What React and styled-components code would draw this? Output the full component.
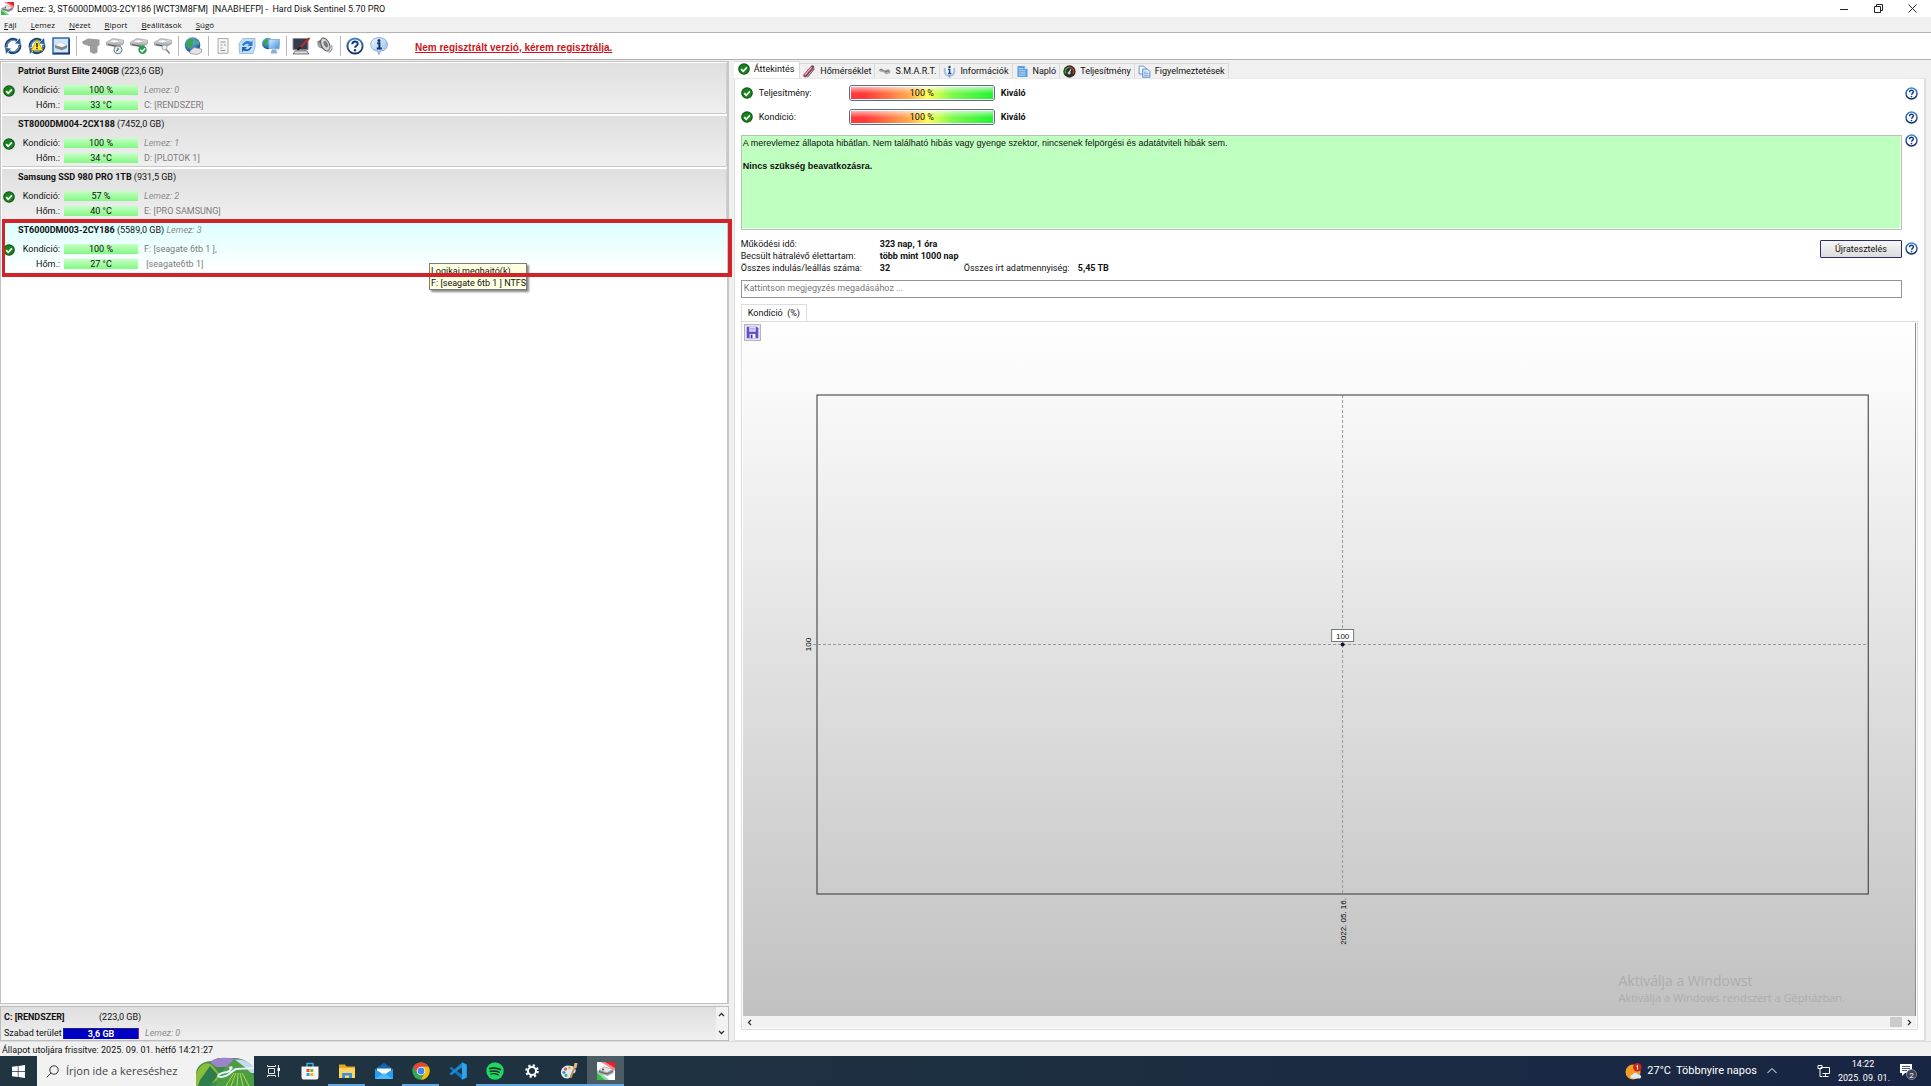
import React from "react";
import styled, { createGlobalStyle, css } from "styled-components";

const GlobalStyle = createGlobalStyle`
  * {
    box-sizing: border-box;
  }
  body {
    margin: 0;
    background: #f0f0f0;
    color: #111;
    font-family: Roboto, "Open Sans", sans-serif;
    font-size: 9px;
    line-height: 12px;
  }
  button,
  input {
    font: inherit;
    color: inherit;
    margin: 0;
    padding: 0;
  }
  svg {
    display: block;
    flex: none;
  }
`;

const Window = styled.div`
  display: flex;
  flex-direction: column;
  min-height: 100vh;
`;

const TitleBar = styled.header`
  display: flex;
  align-items: center;
  height: 17px;
  padding: 0 10px 0 1px;
  background: #fff;
  h1 {
    flex: 1;
    margin: 0 0 0 3px;
    font-size: 9px;
    font-weight: 400;
    white-space: pre;
  }
`;

const WindowButtons = styled.div`
  display: flex;
  button {
    display: flex;
    align-items: center;
    justify-content: center;
    width: 18px;
    height: 16px;
    margin-left: 16px;
    border: 0;
    background: none;
  }
`;

const MenuBar = styled.nav`
  display: flex;
  gap: 14px;
  height: 16px;
  padding: 2px 4px;
  border-bottom: 1px solid #b4b4b4;
  button {
    border: 0;
    background: none;
    font-family: "Open Sans", sans-serif;
    font-size: 8px;
    line-height: 12px;
  }
`;

const ToolBar = styled.div`
  display: flex;
  align-items: center;
  height: 27px;
  padding-left: 1px;
  background: #fff;
  border-bottom: 1px solid #b0b0b0;
  a {
    margin-left: 24px;
    padding-top: 3px;
    color: #cc1420;
    font-family: "Liberation Sans", sans-serif;
    font-size: 10px;
    font-weight: 700;
  }
`;

const ToolButton = styled.button`
  display: flex;
  align-items: center;
  justify-content: center;
  width: 24px;
  height: 22px;
  border: 0;
  background: none;
`;

const ToolSeparator = styled.i`
  width: 1px;
  height: 20px;
  margin: 0 2px 0 3px;
  background: #b8b8b8;
`;

const Workspace = styled.main`
  flex: 1;
  display: grid;
  grid-template-columns: 38fr 62fr;
  padding-top: 1px;
`;

const LeftColumn = styled.section`
  display: flex;
  flex-direction: column;
  gap: 2px;
  padding-right: 5px;
`;

const DiskList = styled.ul`
  flex: 1;
  margin: 0;
  padding: 1px 0 0 1px;
  list-style: none;
  background: #fff;
  border: 1px solid #c2c2c2;
  border-right: 2px solid #c8c8c8;
`;

const DiskItem = styled.li`
  position: relative;
  height: 51px;
  margin-bottom: 2px;
  padding-top: 2px;
  border-right: 1px solid #d0d0d0;
  border-bottom: 1px solid #c9c9c9;
  background: linear-gradient(#dfdfdf, #efefef);
  ${(props) =>
    props.$selected &&
    css`
      border-color: transparent;
      background: linear-gradient(#dcffff, #fff);
    `};
`;

const DiskName = styled.div`
  height: 17px;
  padding-left: 16px;
  line-height: 13px;
  em {
    color: #8c8c8c;
  }
`;

const DiskBody = styled.div`
  display: grid;
  grid-template-columns: 14px 47px 74px 1fr;
  grid-auto-rows: 15px;
  align-items: center;
  padding-left: 1px;
  > svg {
    grid-row: span 2;
    align-self: start;
    margin-top: 3px;
  }
`;

const Label = styled.span`
  padding-right: 4px;
  text-align: right;
`;

const Meter = styled.span`
  height: 10px;
  line-height: 11px;
  text-align: center;
  background: linear-gradient(#c6ffc6, #84f884);
`;

const Volume = styled.span`
  padding-left: 6px;
  color: #7c7c7c;
  white-space: pre;
  ${(props) =>
    props.$italic &&
    css`
      color: #8c8c8c;
      font-style: italic;
    `};
`;

const Highlight = styled.div`
  position: absolute;
  inset: -3px -6px -5px 0;
  z-index: 3;
  border: 4px solid #d2232a;
  border-left-width: 3px;
`;

const Tooltip = styled.div`
  position: absolute;
  top: 41px;
  left: 59%;
  z-index: 2;
  padding: 1px 0 0 1px;
  line-height: 12px;
  background: #ffffe1;
  border: 1px solid #7c7c7c;
  box-shadow: 2px 2px 2px #0007;
`;

const VolumePanel = styled.div`
  display: flex;
  height: 35px;
  border: 1px solid #bdbdbd;
  background: linear-gradient(#dfdfdf, #efefef);
`;

const VolumeGrid = styled.div`
  flex: 1;
  display: grid;
  grid-template-columns: 59px 76px 1fr;
  grid-template-rows: 19px 14px;
  align-items: center;
  padding-left: 3px;
  white-space: nowrap;
  .name {
    font-weight: 700;
  }
  .size {
    grid-column: span 2;
    padding-left: 36px;
  }
  .free {
    height: 11px;
    line-height: 11px;
    color: #fff;
    font-weight: 700;
    text-align: center;
    background: #0000c4;
    border: 1px solid #22227c;
    border-right-color: #8c2a6c;
    border-bottom: 0;
  }
`;

const ScrollArrows = styled.div`
  display: flex;
  flex-direction: column;
  justify-content: space-between;
  align-items: center;
  width: 12px;
  padding: 4px 0;
  background: #f2f2f2;
`;

const RightColumn = styled.section`
  display: flex;
  flex-direction: column;
  min-width: 0;
  padding-right: 5px;
`;

const TabList = styled.div`
  display: flex;
  align-items: flex-end;
  height: 17px;
`;

const Tab = styled.button`
  display: flex;
  align-items: center;
  gap: 4px;
  height: 15px;
  padding: 0 3px;
  border: 1px solid #dadada;
  border-left: 0;
  border-bottom: 0;
  background: #f0f0f0;
  white-space: nowrap;
  ${(props) =>
    props.$active &&
    css`
      height: 17px;
      padding: 0 5px 2px 4px;
      background: #fff;
    `};
`;

const TabPage = styled.div`
  flex: 1;
  display: flex;
  flex-direction: column;
  padding: 2px 6px 10px 6px;
  background: #fff;
  border: 1px solid #dedede;
  border-top-color: #e8e8e8;
  border-right-width: 2px;
`;

const GaugeRow = styled.div`
  display: grid;
  grid-template-columns: 18px 90px 146px 1fr 14px;
  align-items: center;
  height: 24px;
  strong {
    padding-left: 6px;
  }
  > svg:last-child {
    justify-self: end;
  }
`;

const Gauge = styled.div`
  height: 16px;
  padding: 1px;
  border: 1px solid #5a6c84;
  border-radius: 3px;
  text-align: center;
  line-height: 12px;
  span {
    display: block;
    background: linear-gradient(#fff9, #fff0 55%),
      linear-gradient(90deg, #ff3a3a 10%, #ffb050 42%, #fcff50 54%, #7cf850 72%, #22f432);
  }
`;

const WithHelp = styled.div`
  display: grid;
  grid-template-columns: 1fr 14px;
  column-gap: 2px;
`;

const StatusText = styled.div`
  min-height: 95px;
  margin-top: 6px;
  padding: 1px;
  background: #bfffbf;
  border: 1px solid #b4c4b4;
  box-shadow: inset -1px -1px #f4fff4;
  font-family: "Liberation Sans", sans-serif;
  font-size: 9px;
  p {
    margin: 0 0 11px;
    line-height: 12px;
  }
`;

const HelpTop = styled.div`
  display: flex;
  justify-content: flex-end;
  align-items: flex-start;
  padding-top: ${(props) => props.$top || 5}px;
`;

const Facts = styled.div`
  display: grid;
  grid-template-columns: 139px 84px 114px 1fr 82px;
  grid-auto-rows: 12px;
  margin-top: 8px;
  white-space: nowrap;
  button {
    grid-area: 1 / 5 / span 2;
    height: 18px;
    margin-top: 2px;
    border: 1px solid #2c2c6c;
    border-radius: 1px;
    background: linear-gradient(#f6f6f6, #dcdcdc);
  }
`;

const NoteInput = styled.input`
  width: calc(100% - 16px);
  height: 18px;
  margin: 6px 0;
  padding: 0 2px 2px;
  border: 1px solid #949494;
  background: #fff;
  &::placeholder {
    color: #787878;
    opacity: 1;
  }
`;

const ChartTab = styled.button`
  align-self: flex-start;
  height: 17px;
  padding: 0 6px;
  border: 1px solid #dcdcdc;
  border-bottom: 0;
  background: #fff;
  white-space: pre;
`;

const ChartFrame = styled.div`
  flex: 1;
  display: flex;
  flex-direction: column;
  padding: 1px;
  border: 1px solid #dcdcdc;
`;

const ChartPanel = styled.div`
  position: relative;
  flex: 1;
  display: flex;
  padding: 72px 47px 122px 74px;
  background: linear-gradient(#fff, #c1c1c1);
  border-right: 1px solid #8c8c8c;
`;

const SaveButton = styled.button`
  position: absolute;
  top: 1px;
  left: 1px;
  display: flex;
  padding: 1px;
  border: 1px solid #b4b4c4;
  background: #e6e4f2;
`;

const Plot = styled.svg`
  flex: 1;
  min-width: 0;
  overflow: visible;
  font-family: "Liberation Sans", sans-serif;
  font-size: 8px;
`;

const Watermark = styled.div`
  position: absolute;
  right: 70px;
  bottom: 10px;
  color: #adadad;
  font-family: "Open Sans", sans-serif;
  font-size: 11px;
  line-height: 17px;
  strong {
    display: block;
    font-size: 14px;
    font-weight: 400;
  }
`;

const ScrollBar = styled.div`
  display: flex;
  align-items: center;
  height: 12px;
  padding: 0 3px;
  background: #f2f2f2;
  i {
    width: 12px;
    height: 10px;
    margin: 0 4px 0 auto;
    background: #cbcbcb;
  }
`;

const StatusBar = styled.footer`
  height: 15px;
  padding: 2px;
  border-top: 1px solid #dcdcdc;
`;

const TaskBar = styled.div`
  display: flex;
  height: 30px;
  color: #fff;
  background: linear-gradient(90deg, #20353f, #1d2f42 50%, #182543);
`;

const TaskButton = styled.button`
  display: flex;
  align-items: center;
  justify-content: center;
  width: 37px;
  padding: 0 1px;
  border: 0;
  background: ${(props) => (props.$active ? "#4b5c65" : "none")};
  box-shadow: ${(props) => (props.$open ? "inset 0 -2px #62a8e0" : "none")};
`;

const SearchBox = styled.label`
  display: flex;
  align-items: center;
  width: 217px;
  padding-left: 9px;
  background: #f2f2f2;
  color: #444;
  input {
    flex: 1;
    width: 0;
    margin-left: 7px;
    border: 0;
    background: none;
    font-family: "Open Sans", sans-serif;
    font-size: 11px;
    &::placeholder {
      color: #444;
      opacity: 1;
    }
  }
`;

const Tray = styled.div`
  display: flex;
  align-items: center;
  margin-left: auto;
  padding-right: 14px;
  font-size: 11px;
  white-space: nowrap;
`;

const Weather = styled.span`
  display: flex;
  align-items: center;
  gap: 5px;
  margin-right: 10px;
`;

const Clock = styled.time`
  width: 50px;
  margin: 0 11px 0 5px;
  font-size: 9px;
  line-height: 14px;
  text-align: center;
`;

const Icon = ({ size = 18, w, h, box = 18, children }) => (
  <svg
    width={w || size}
    height={h || size}
    viewBox={`0 0 ${box} ${h ? Math.round((box * h) / (w || size)) : box}`}
    fill="none"
    aria-hidden="true"
  >
    {children}
  </svg>
);

const Gradients = () => (
  <svg width="0" height="0" style={{ position: "absolute" }} aria-hidden="true">
    <defs>
      <linearGradient id="metal" x1="0" y1="0" x2="0" y2="1">
        <stop offset="0" stopColor="#f4f4f4" />
        <stop offset="1" stopColor="#8a8f94" />
      </linearGradient>
      <linearGradient id="sky" x1="0" y1="0" x2="1" y2="1">
        <stop offset="0" stopColor="#eef8ff" />
        <stop offset="1" stopColor="#8cbce8" />
      </linearGradient>
      <linearGradient id="screen" x1="0" y1="0" x2="1" y2="1">
        <stop offset="0" stopColor="#d4efff" />
        <stop offset="1" stopColor="#3c8cdc" />
      </linearGradient>
      <radialGradient id="globe" cx="0.4" cy="0.3" r="0.7">
        <stop offset="0" stopColor="#7cc4f4" />
        <stop offset="1" stopColor="#124c9c" />
      </radialGradient>
      <linearGradient id="ring" x1="0" y1="0" x2="0" y2="1">
        <stop offset="0" stopColor="#3f86cc" />
        <stop offset="1" stopColor="#12305e" />
      </linearGradient>
    </defs>
  </svg>
);

const CheckIcon = ({ size = 12 }) => (
  <Icon size={size} box={12}>
    <circle cx="6" cy="6" r="5.8" fill="#0c4d12" />
    <circle cx="6" cy="6" r="4.8" fill="#16841c" />
    <path d="M3.2 6.1l2 2.2 3.7-4" stroke="#fff" strokeWidth="1.7" />
  </Icon>
);

const HelpIcon = ({ size = 13 }) => (
  <Icon size={size}>
    <circle cx="9" cy="9" r="7.6" fill="#fff" stroke="url(#ring)" strokeWidth="2" />
    <path
      d="M6.3 7.2c0-3.6 5.6-3.5 5.4-.2-.1 1.8-2.6 1.9-2.6 3.8"
      stroke="#173a86"
      strokeWidth="2"
    />
    <circle cx="9" cy="13.2" r="1.2" fill="#173a86" />
  </Icon>
);

const Refresh = () => (
  <>
    <path d="M2.3 10.5A6.9 6.9 0 0 1 13 3.6" stroke="#1d4578" strokeWidth="3" />
    <path d="M15.7 7.5A6.9 6.9 0 0 1 5 14.4" stroke="#1d4578" strokeWidth="3" />
    <path d="M2.6 9.5A6.4 6.4 0 0 1 12 4" stroke="#7cacdc" />
    <path d="M15.4 8.5A6.4 6.4 0 0 1 6 14" stroke="#7cacdc" />
    <path d="M11 6.6l5.8.4L16 1z" fill="#2c5c94" />
    <path d="M7 11.4L1.2 11 2 17z" fill="#2c5c94" />
  </>
);

const Drive = () => (
  <>
    <path d="M.5 5L7 1.5l10.5 1.7v3.5L11.5 10 .5 8z" fill="url(#metal)" stroke="#999" strokeWidth=".7" />
    <ellipse cx="8.5" cy="4.3" rx="4.5" ry="1.6" fill="#fafafa" stroke="#999" strokeWidth=".6" />
    <path d="M2 7.7l9 1.6" stroke="#555" />
  </>
);

const Magnet = () => (
  <>
    <path d="M2.5 4C1 13 5 15 9 15s8-2 6.5-11" stroke="#9cc0e4" strokeWidth="2.5" />
    <path d="M9 14v3.5" stroke="#7ca4cc" strokeWidth="2" />
    <path d="M7 6.3h2.2v5.5M7 11.8h4.6" stroke="#174c9c" strokeWidth="2" />
    <circle cx="9" cy="2.8" r="1.7" fill="#174c9c" />
  </>
);

const Bubble = () => (
  <>
    <path
      d="M9 .6c11 0 11 13.2 1.5 13.4L8.8 17.5 7.5 14C-2 13.5-1.5.6 9 .6z"
      fill="url(#sky)"
      stroke="#7c9cbc"
      strokeWidth=".8"
    />
    <path d="M7.2 6.3h2.2v5M6.8 11.4h5" stroke="#14307c" strokeWidth="2" />
    <circle cx="9" cy="3.4" r="1.5" fill="#14307c" />
  </>
);

const DiskLogo = () => (
  <>
    <path d="M0 0h18v18H0z" fill="#fff" />
    <path d="M4 0h14v9z" fill="#f4868c" />
    <path d="M8 0h10v6z" fill="#e8202c" />
    <path d="M0 8l12 10H0z" fill="#8cd89c" />
    <path d="M0 11l8 7H0z" fill="#38b84c" />
    <path d="M1.5 8l6-3.5 9 2.5v4l-6 3-9-3z" fill="#a4a4a4" />
    <path d="M2.5 7.8l5-2.5 7.5 2-5 3z" fill="#e6e6e6" />
    <path d="M2 9.5l8 2.5 6-3" stroke="#555" strokeWidth=".9" />
    <circle cx="6" cy="7.5" r="1" fill="#444" />
  </>
);

const toolIcons = [
  ["Frissítés", <Refresh />],
  [
    "Figyelmeztetés",
    <>
      <Refresh />
      <path d="M9 2.5l6 11H3z" fill="#ffe62c" stroke="#a48a00" strokeWidth=".7" />
      <path d="M9 6v4M9 10.8v1.5" stroke="#222" strokeWidth="1.5" />
    </>,
  ],
  [
    "Áttekintés",
    <>
      <path d="M1 1h16v16H1z" fill="#cfe6fa" stroke="#2c68ac" strokeWidth="1.5" />
      <path d="M1.5 16.3h15.8V2" stroke="#1c3c6c" strokeWidth="1.5" />
      <path d="M3 8l5-2.5L15 8v3l-5 2.2L3 11z" fill="#84888c" />
      <path d="M3 8l5-2.5L15 8l-5 2.3z" fill="#f6f6f6" />
    </>,
  ],
  null,
  [
    "Lemez",
    <path d="M0 4.5L6 1.5l11.5 1V8l-2 1.5v6L12 17l-4-2V9.5L1 7z" fill="#9c9c9c" />,
  ],
  [
    "Ütemezés",
    <>
      <Drive />
      <circle cx="12" cy="12.8" r="4" fill="#e4edf2" stroke="#6c7c88" />
      <path d="M12 10.8V13l-1.8 1" stroke="#345" />
    </>,
  ],
  [
    "Teszt",
    <>
      <Drive />
      <circle cx="12.5" cy="12.7" r="4.2" fill="#289c48" />
      <path d="M10.3 12.6l1.8 2 3-3.4" stroke="#fff" strokeWidth="1.4" />
    </>,
  ],
  [
    "Keresés",
    <>
      <Drive />
      <circle cx="10.5" cy="10.5" r="2.5" fill="#e4f2fa" stroke="#9caab4" />
      <path d="M12.2 12.5l3.5 4" stroke="#8c7c6c" strokeWidth="1.5" />
    </>,
  ],
  null,
  [
    "Hálózat",
    <>
      <circle cx="8.5" cy="8" r="7.8" fill="url(#globe)" />
      <path d="M3 4c2-3 5-3 6-2 2 2-1 3 0 5s-3 3-2 5c-4-1-5-4-4-8z" fill="#3ca44c" />
      <path d="M11 3l4 2v3l-3-1z" fill="#4cb45c" />
      <path d="M6 14l4-3.5 7.5 1.5v3L13 17.5l-7-1z" fill="#e4e4e4" stroke="#8c8c8c" strokeWidth=".7" />
    </>,
  ],
  null,
  [
    "Jelentés",
    <>
      <path d="M4 1.5h10v14.8H4z" fill="#f4f4f2" stroke="#acaca4" />
      <path d="M6.5 5h5M6.5 8h2M10 8h2M6.5 11h2M6.5 13.5h5" stroke="#8c9c9c" />
    </>,
  ],
  [
    "Küldés",
    <>
      <path d="M1 6.5l4-5h12V10l-2 6.5H1.5z" fill="#c4e0f8" stroke="#8cb0d4" strokeWidth=".8" />
      <path d="M4 8c2-4 6-5 9-3l1.5-1.8V9H9.2l2-1.8C9 6 7 6.8 6 9z" fill="#2c7cdc" />
      <path d="M14 10c-2 4.5-6 5-8.5 3.5L4 15.5V10h5l-1.7 1.8C9 13 11 12 12 10z" fill="#1c64bc" />
    </>,
  ],
  [
    "Távoli elérés",
    <>
      <circle cx="5.8" cy="6.5" r="5.7" fill="url(#globe)" />
      <path d="M2 4c2-3 4-2 4 0s-2 3-1 5c-3 0-4-3-3-5z" fill="#3ca44c" />
      <path d="M7 2.5h10.8L17 12l-10-.5z" fill="url(#screen)" stroke="#8cb4dc" />
      <path d="M10 12.5h4l1.5 4h-7z" fill="#8cb0d4" />
    </>,
  ],
  null,
  [
    "Képernyő",
    <>
      <path d="M1 1.5h15v11.3H1z" fill="#343c50" stroke="#8c8c9c" />
      <path d="M1 17l2.5-3.2h11L17 17z" fill="#d8d8d8" stroke="#444" strokeWidth=".7" />
      <path d="M17.5 1L8 10.5" stroke="#b8301c" strokeWidth="2" />
      <path d="M8.5 10l-3 3" stroke="#111" strokeWidth="1.5" />
    </>,
  ],
  [
    "Hangok",
    <>
      <path d="M1.5 4.5L8 1l5 12.5L4.5 11z" fill="#6c6c6c" />
      <path d="M1.5 4.5C.5 7 2 10.5 4.5 11L6 7z" fill="#9c9c9c" />
      <ellipse cx="9.3" cy="7.5" rx="4" ry="7" fill="#d4d4d4" stroke="#5c5c5c" transform="rotate(-25 9.3 7.5)" />
      <ellipse cx="9.8" cy="7.2" rx="1.8" ry="3.4" fill="#777" transform="rotate(-25 9.8 7.2)" />
      <path d="M15.5 8c1.5 3 .5 6-3 7.5M13.5 9.5c.5 2 0 3-1.5 4" stroke="#9494b4" strokeWidth="1.2" />
    </>,
  ],
  null,
  ["Súgó", <HelpIcon size={18} />],
  ["Névjegy", <Bubble />],
];

const tabs = [
  ["Áttekintés", <CheckIcon />],
  [
    "Hőmérséklet",
    <Icon size={13}>
      <path d="M3 14.5L13 3" stroke="#8c3c54" strokeWidth="5" strokeLinecap="round" />
      <path d="M2.5 14L12 3" stroke="#ecc4cc" strokeWidth="1.5" />
      <path d="M6 17l10-12" stroke="#646464" strokeWidth="1.5" />
    </Icon>,
  ],
  [
    "S.M.A.R.T.",
    <Icon size={13}>
      <path d="M1 7l4-2 3 2 7-1 2 2v3l-6 2-3-3-5-1z" fill="#aaa" />
      <path d="M2 7l3-1 2 2M9 9.5L14 8l2 1.5" stroke="#555" />
    </Icon>,
  ],
  [
    "Információk",
    <Icon size={13}>
      <Magnet />
    </Icon>,
  ],
  [
    "Napló",
    <Icon size={13}>
      <path d="M2 1.5h10l4 4v11H2z" fill="#5ca0e0" />
      <path d="M4 5h6M4 8h9M4 11h9M4 14h9" stroke="#e4f2fc" />
      <path d="M12 1.5l4 4h-4z" fill="#d4e8f8" />
    </Icon>,
  ],
  [
    "Teljesítmény",
    <Icon size={13}>
      <circle cx="9" cy="9" r="8.5" fill="#2a2f2a" />
      <path d="M4 12a6 6 0 0 1 5-9" stroke="#3ca43c" strokeWidth="2" />
      <path d="M9 3a6 6 0 0 1 5 9" stroke="#bc3c2c" strokeWidth="2" />
      <path d="M8 11l3-5" stroke="#ececec" strokeWidth="1.5" />
      <circle cx="8.5" cy="11" r="2" fill="#ccc" />
    </Icon>,
  ],
  [
    "Figyelmeztetések",
    <Icon size={13}>
      <path d="M1.5 1.5H8l3 3v8H1.5z" fill="#f4faff" stroke="#3c6cbc" />
      <path d="M6.5 5.5H13L16.5 9v8h-10z" fill="#d4e6fa" stroke="#3c6cbc" />
      <path d="M8.5 10h3M8.5 12h6M8.5 14.5h6" stroke="#6c94cc" />
    </Icon>,
  ],
];

const disks = [
  { name: "Patriot Burst Elite 240GB", size: "223,6 GB", health: "100 %", temp: "33 °C", no: 0, letter: "C:", volume: "[RENDSZER]" },
  { name: "ST8000DM004-2CX188", size: "7452,0 GB", health: "100 %", temp: "34 °C", no: 1, letter: "D:", volume: "[PLOTOK 1]" },
  { name: "Samsung SSD 980 PRO 1TB", size: "931,5 GB", health: "57 %", temp: "40 °C", no: 2, letter: "E:", volume: "[PRO SAMSUNG]" },
  { name: "ST6000DM003-2CY186", size: "5589,0 GB", health: "100 %", temp: "27 °C", no: 3, selected: true },
];

const Disk = ({ disk }) => (
  <DiskItem $selected={disk.selected}>
    <DiskName>
      <strong>{disk.name}</strong> ({disk.size}) {disk.selected && <em>Lemez: {disk.no}</em>}
    </DiskName>
    <DiskBody>
      <CheckIcon />
      <Label>Kondíció:</Label>
      <Meter>{disk.health}</Meter>
      {disk.selected ? (
        <Volume>F: [seagate 6tb 1 ],</Volume>
      ) : (
        <Volume $italic>Lemez: {disk.no}</Volume>
      )}
      <Label>Hőm.:</Label>
      <Meter>{disk.temp}</Meter>
      <Volume>{disk.selected ? " [seagate6tb 1]" : `${disk.letter} ${disk.volume}`}</Volume>
    </DiskBody>
    {disk.selected && (
      <>
        <Tooltip role="tooltip">
          Logikai meghajtó(k)
          <br />
          F: [seagate 6tb 1 ] NTFS
        </Tooltip>
        <Highlight />
      </>
    )}
  </DiskItem>
);

const Chart = () => (
  <Plot role="img" aria-label="Kondíció (%)">
    <line x1="-4" x2="100%" y1="50%" y2="50%" stroke="#999" strokeDasharray="3 2" />
    <line x1="50%" x2="50%" y1="0" y2="100%" stroke="#999" strokeDasharray="3 2" />
    <rect width="100%" height="100%" fill="none" stroke="#333" />
    <svg x="50%" y="50%" overflow="visible">
      <rect x="-11" y="-15" width="22" height="12" fill="#fff" stroke="#777" />
      <text y="-6" textAnchor="middle" fill="#111">
        100
      </text>
      <circle r="2" fill="#14143c" />
    </svg>
    <svg x="0" y="50%" overflow="visible">
      <text transform="translate(-6 0) rotate(-90)" textAnchor="middle">
        100
      </text>
    </svg>
    <svg x="50%" y="100%" overflow="visible">
      <text transform="translate(3 4) rotate(-90)" textAnchor="end">
        2022. 05. 16.
      </text>
    </svg>
  </Plot>
);

const Chevron = ({ d }) => (
  <Icon size={7} box={7}>
    <path d={d} stroke="#333" strokeWidth="1.3" />
  </Icon>
);

const taskIcons = [
  {
    label: "Feladatnézet",
    icon: (
      <>
        <path d="M4.5 6.5h6v5h-6zM3.5 3v1.5h8V3M3.5 15v-1.5h8V15M14.5 3v12" stroke="#e4e4e4" />
        <path d="M13.5 6H16v3h-2.5z" fill="#fff" />
      </>
    ),
  },
  {
    label: "Microsoft Store",
    icon: (
      <>
        <path d="M6 5V1.5h6V5" stroke="#38b0e4" strokeWidth="1.5" />
        <path d="M.5 4.5h17V15q0 2.5-2 2.5h-13q-2 0-2-2.5z" fill="#f6f6f6" />
        <path d="M5.5 7h3v3h-3z" fill="#e4502c" />
        <path d="M9.3 7h3v3h-3z" fill="#7cb42c" />
        <path d="M5.5 11h3v3h-3z" fill="#2c9ce4" />
        <path d="M9.3 11h3v3h-3z" fill="#f4b41c" />
      </>
    ),
  },
  {
    label: "Fájlkezelő",
    open: true,
    icon: (
      <>
        <path d="M1 2.5h6l1.5 2H17V15H1z" fill="#e8a820" />
        <path d="M1 6h16v10H1z" fill="#fcd462" />
        <path d="M4 16v-5h10v5h-3v-2.5H7V16z" fill="#3c94dc" />
      </>
    ),
  },
  {
    label: "Posta",
    icon: (
      <>
        <path d="M0 7l9-6 9 6v10H0z" fill="#1464b4" />
        <path d="M2 6.5h14V12H2z" fill="#f4faff" />
        <path d="M0 7l9 6 9-6v10H0z" fill="#2c9cec" />
        <path d="M0 17l9-6 9 6z" fill="#4cbcfc" />
      </>
    ),
  },
  {
    label: "Chrome",
    open: true,
    icon: (
      <>
        <circle cx="9" cy="9" r="8.7" fill="#34a853" />
        <path d="M1.5 4.7A8.7 8.7 0 0 1 16.5 4.7H9L5.3 11.2z" fill="#ea4335" />
        <path d="M16.5 4.7A8.7 8.7 0 0 1 9 17.7L12.8 11 9 4.7z" fill="#fbbc05" />
        <circle cx="9" cy="9" r="4.3" fill="#fff" />
        <circle cx="9" cy="9" r="3.4" fill="#4285f4" />
      </>
    ),
  },
  {
    label: "Visual Studio Code",
    icon: (
      <>
        <path d="M.5 6.2l1.8-1.4L13.5 13v4.7z" fill="#1474bc" />
        <path d="M.5 11.8l1.8 1.4L13.5 5V.3z" fill="#1c88d4" />
        <path d="M13 .3l4.8 2.2v13L13 17.7z" fill="#2ca4f4" />
      </>
    ),
  },
  {
    label: "Spotify",
    open: true,
    icon: (
      <>
        <circle cx="9" cy="9" r="8.7" fill="#1ed760" />
        <path d="M3.8 6.6c3.6-1 7.4-.7 10.5 1" stroke="#14242c" strokeWidth="1.7" strokeLinecap="round" />
        <path d="M4.3 9.4c3-.8 6.3-.5 9 .9" stroke="#14242c" strokeWidth="1.5" strokeLinecap="round" />
        <path d="M4.8 12c2.6-.6 5.2-.3 7.4.9" stroke="#14242c" strokeWidth="1.2" strokeLinecap="round" />
      </>
    ),
  },
  {
    label: "Gépház",
    open: true,
    icon: (
      <>
        <circle cx="9" cy="9" r="4" stroke="#fff" strokeWidth="2" />
        <circle cx="9" cy="9" r="5.7" stroke="#fff" strokeWidth="2.2" strokeDasharray="2.238 2.238" />
      </>
    ),
  },
  {
    label: "Paint",
    open: true,
    icon: (
      <>
        <path d="M8 3.5c6 0 8.5 3 7.5 6s-4 1.5-4.5 3-.5 4-4 4C3 16.5.5 13 1 9.5s3.5-6 7-6z" fill="#dce8f0" />
        <circle cx="4" cy="10.5" r="1.5" fill="#3c84dc" />
        <circle cx="5.5" cy="7" r="1.5" fill="#dc4c3c" />
        <circle cx="9.5" cy="6" r="1.4" fill="#f4b42c" />
        <circle cx="6" cy="13.5" r="1.4" fill="#3cac54" />
        <path d="M16 1.5L10.5 16" stroke="#c48c4c" strokeWidth="2" />
        <path d="M14.5 1h3l-1 5h-3z" fill="#e4b47c" />
      </>
    ),
  },
  { label: "Hard Disk Sentinel", open: true, active: true, icon: <DiskLogo /> },
];

const menu = ["Fájl", "Lemez", "Nézet", "Riport", "Beállítások", "Súgó"];

const App = () => {
  return (
    <Window>
      <GlobalStyle />
      <Gradients />
      <TitleBar>
        <Icon size={13}>
          <DiskLogo />
        </Icon>
        <h1>{"Lemez: 3, ST6000DM003-2CY186 [WCT3M8FM]  [NAABHEFP] -  Hard Disk Sentinel 5.70 PRO"}</h1>
        <WindowButtons>
          <button aria-label="Kis méret">
            <Icon size={8} box={8}>
              <path d="M0 4.5h8" stroke="#222" />
            </Icon>
          </button>
          <button aria-label="Előző méret">
            <Icon size={9} box={9}>
              <path d="M.5 2.5h6v6h-6zM2.5 2.5v-2h6v6h-2" stroke="#222" />
            </Icon>
          </button>
          <button aria-label="Bezárás">
            <Icon size={9} box={9}>
              <path d="M.5.5l8 8M8.5.5l-8 8" stroke="#222" />
            </Icon>
          </button>
        </WindowButtons>
      </TitleBar>
      <MenuBar>
        {menu.map((item) => (
          <button key={item}>
            <u>{item[0]}</u>
            {item.slice(1)}
          </button>
        ))}
      </MenuBar>
      <ToolBar>
        {toolIcons.map((tool, i) =>
          tool ? (
            <ToolButton key={i} aria-label={tool[0]}>
              <Icon>{tool[1]}</Icon>
            </ToolButton>
          ) : (
            <ToolSeparator key={i} />
          )
        )}
        <a href="#register">Nem regisztrált verzió, kérem regisztrálja.</a>
      </ToolBar>
      <Workspace>
        <LeftColumn>
          <DiskList>
            {disks.map((disk) => (
              <Disk key={disk.no} disk={disk} />
            ))}
          </DiskList>
          <VolumePanel>
            <VolumeGrid>
              <span className="name">C: [RENDSZER]</span>
              <span className="size">(223,0 GB)</span>
              <span>Szabad terület</span>
              <span className="free">3,6 GB</span>
              <Volume $italic>Lemez: 0</Volume>
            </VolumeGrid>
            <ScrollArrows>
              <Chevron d="M1 5l2.5-2.5L6 5" />
              <Chevron d="M1 2l2.5 2.5L6 2" />
            </ScrollArrows>
          </VolumePanel>
        </LeftColumn>
        <RightColumn>
          <TabList role="tablist">
            {tabs.map(([label, icon], i) => (
              <Tab key={label} role="tab" aria-selected={i === 0} $active={i === 0}>
                {icon}
                {label}
              </Tab>
            ))}
          </TabList>
          <TabPage>
            {["Teljesítmény:", "Kondíció:"].map((label) => (
              <GaugeRow key={label}>
                <CheckIcon />
                <span>{label}</span>
                <Gauge>
                  <span>100 %</span>
                </Gauge>
                <strong>Kiváló</strong>
                <HelpIcon />
              </GaugeRow>
            ))}
            <WithHelp>
              <StatusText>
                <p>
                  A merevlemez állapota hibátlan. Nem található hibás vagy gyenge szektor, nincsenek
                  felpörgési és adatátviteli hibák sem.
                </p>
                <p>
                  <strong>Nincs szükség beavatkozásra.</strong>
                </p>
              </StatusText>
              <HelpTop>
                <HelpIcon />
              </HelpTop>
            </WithHelp>
            <WithHelp>
              <Facts>
                <span>Működési idő:</span>
                <strong>323 nap, 1 óra</strong>
                <span />
                <span />
                <button>Újratesztelés</button>
                <span>Becsült hátralévő élettartam:</span>
                <strong>több mint 1000 nap</strong>
                <span />
                <span />
                <span>Összes indulás/leállás száma:</span>
                <strong>32</strong>
                <span>Összes írt adatmennyiség:</span>
                <strong>5,45 TB</strong>
              </Facts>
              <HelpTop $top={12}>
                <HelpIcon />
              </HelpTop>
            </WithHelp>
            <NoteInput aria-label="Megjegyzés" placeholder="Kattintson megjegyzés megadásához ..." />
            <ChartTab>{"Kondíció  (%)"}</ChartTab>
            <ChartFrame>
              <ChartPanel>
                <SaveButton aria-label="Mentés">
                  <Icon size={13}>
                    <path d="M1 1h14l2 2v14H1z" fill="#6450c4" />
                    <path d="M4.5 1h9v7h-9z" fill="#dcdcf4" />
                    <path d="M5 11h8v6H5z" fill="#f4f4fc" />
                    <path d="M6.5 12H9v5H6.5z" fill="#4434a4" />
                    <path d="M6 3.5h6M6 5.5h6" stroke="#a49cd4" />
                  </Icon>
                </SaveButton>
                <Chart />
                <Watermark>
                  <strong>Aktiválja a Windowst</strong>
                  Aktiválja a Windows rendszert a Gépházban.
                </Watermark>
              </ChartPanel>
              <ScrollBar>
                <Chevron d="M5 1L2.5 3.5 5 6" />
                <i />
                <Chevron d="M2 1l2.5 2.5L2 6" />
              </ScrollBar>
            </ChartFrame>
          </TabPage>
        </RightColumn>
      </Workspace>
      <StatusBar>Állapot utoljára frissítve: 2025. 09. 01. hétfő 14:21:27</StatusBar>
      <TaskBar>
        <TaskButton aria-label="Start">
          <Icon size={13} box={13}>
            <path d="M0 1.8L5.8 1v5.2H0zM6.5.9L13 0v6.2H6.5zM0 6.9h5.8V12L0 11.2zM6.5 6.9H13V13l-6.5-.9z" fill="#fff" />
          </Icon>
        </TaskButton>
        <SearchBox>
          <Icon size={13} box={13}>
            <circle cx="8" cy="5" r="4.2" stroke="#333" />
            <path d="M5 8L.7 12.3" stroke="#333" />
          </Icon>
          <input type="search" aria-label="Keresés" placeholder="Írjon ide a kereséshez" />
          <svg width="58" height="30" viewBox="0 0 58 30" aria-hidden="true">
            <path d="M0 30V17C1 9 8 5 16 5l6-3h18c8 1 14 5 18 10v18z" fill="#3c8c4c" />
            <path d="M14 6c6-6 24-5 36-1l4 6H20z" fill="#9c84cc" />
            <path d="M38 5c6-3 12-1 20 6v6H40z" fill="#c4dce8" />
            <path d="M0 18C4 8 10 5 16 9l10 12L12 30H0z" fill="#8cbc3c" />
            <path d="M4 24l10-14 8 9-8 11H2z" fill="#2c7c4c" />
            <path d="M22 20L38 3l12 9 8 8v10H20z" fill="#4c9c44" />
            <path d="M33 12c5-3 2 3-2 4-8 1-12 5-6 5 8 0 10-6 15-8l18-1" stroke="#e4f4f8" strokeWidth="2" fill="none" />
            <path d="M30 30l8-13M35 30l5-13M41 30l1-13M47 30l-3-13M53 30l-7-13" stroke="#b4d84c" fill="none" />
          </svg>
        </SearchBox>
        {taskIcons.map((task) => (
          <TaskButton key={task.label} aria-label={task.label} $open={task.open} $active={task.active}>
            <Icon>{task.icon}</Icon>
          </TaskButton>
        ))}
        <Tray>
          <Weather>
            <Icon size={17}>
              <circle cx="8.5" cy="9.5" r="8" fill="#f49c24" />
              <path d="M8 16.5c-3 0-3-4 0-4 1-3 5-3 6 0 4-.5 4 4 1 4z" fill="#dce8fc" />
              <circle cx="13" cy="4.5" r="4.5" fill="#c8281c" />
              <path d="M12 3.5l1.3-1V7" stroke="#fff" />
            </Icon>
            <span>27°C</span>
            <span>Többnyire napos</span>
          </Weather>
          <Icon size={10} box={10}>
            <path d="M.5 7L5 2.5 9.5 7" stroke="#fff" />
          </Icon>
          <Icon w={56} h={14} box={56}>
            <path d="M43.5 3.5h9v6h-7M48.5 9.5V12M45.5 12.5h6M41 1.5h4v3h-4zM43 5v7.5h2" stroke="#fff" />
          </Icon>
          <Clock>
            14:22
            <br />
            2025. 09. 01.
          </Clock>
          <Icon size={18}>
            <path d="M1 2h12v9H6l-3 3v-3H1z" fill="#fff" />
            <path d="M3 4.5h8M3 6.5h8M3 8.5h5" stroke="#1c2844" strokeWidth=".8" />
            <circle cx="12.5" cy="12.5" r="5" fill="#3c4454" stroke="#9ca4ac" strokeWidth=".7" />
            <text x="12.5" y="15.5" textAnchor="middle" fontSize="8" fill="#fff">
              2
            </text>
          </Icon>
        </Tray>
      </TaskBar>
    </Window>
  );
};

export default App;
